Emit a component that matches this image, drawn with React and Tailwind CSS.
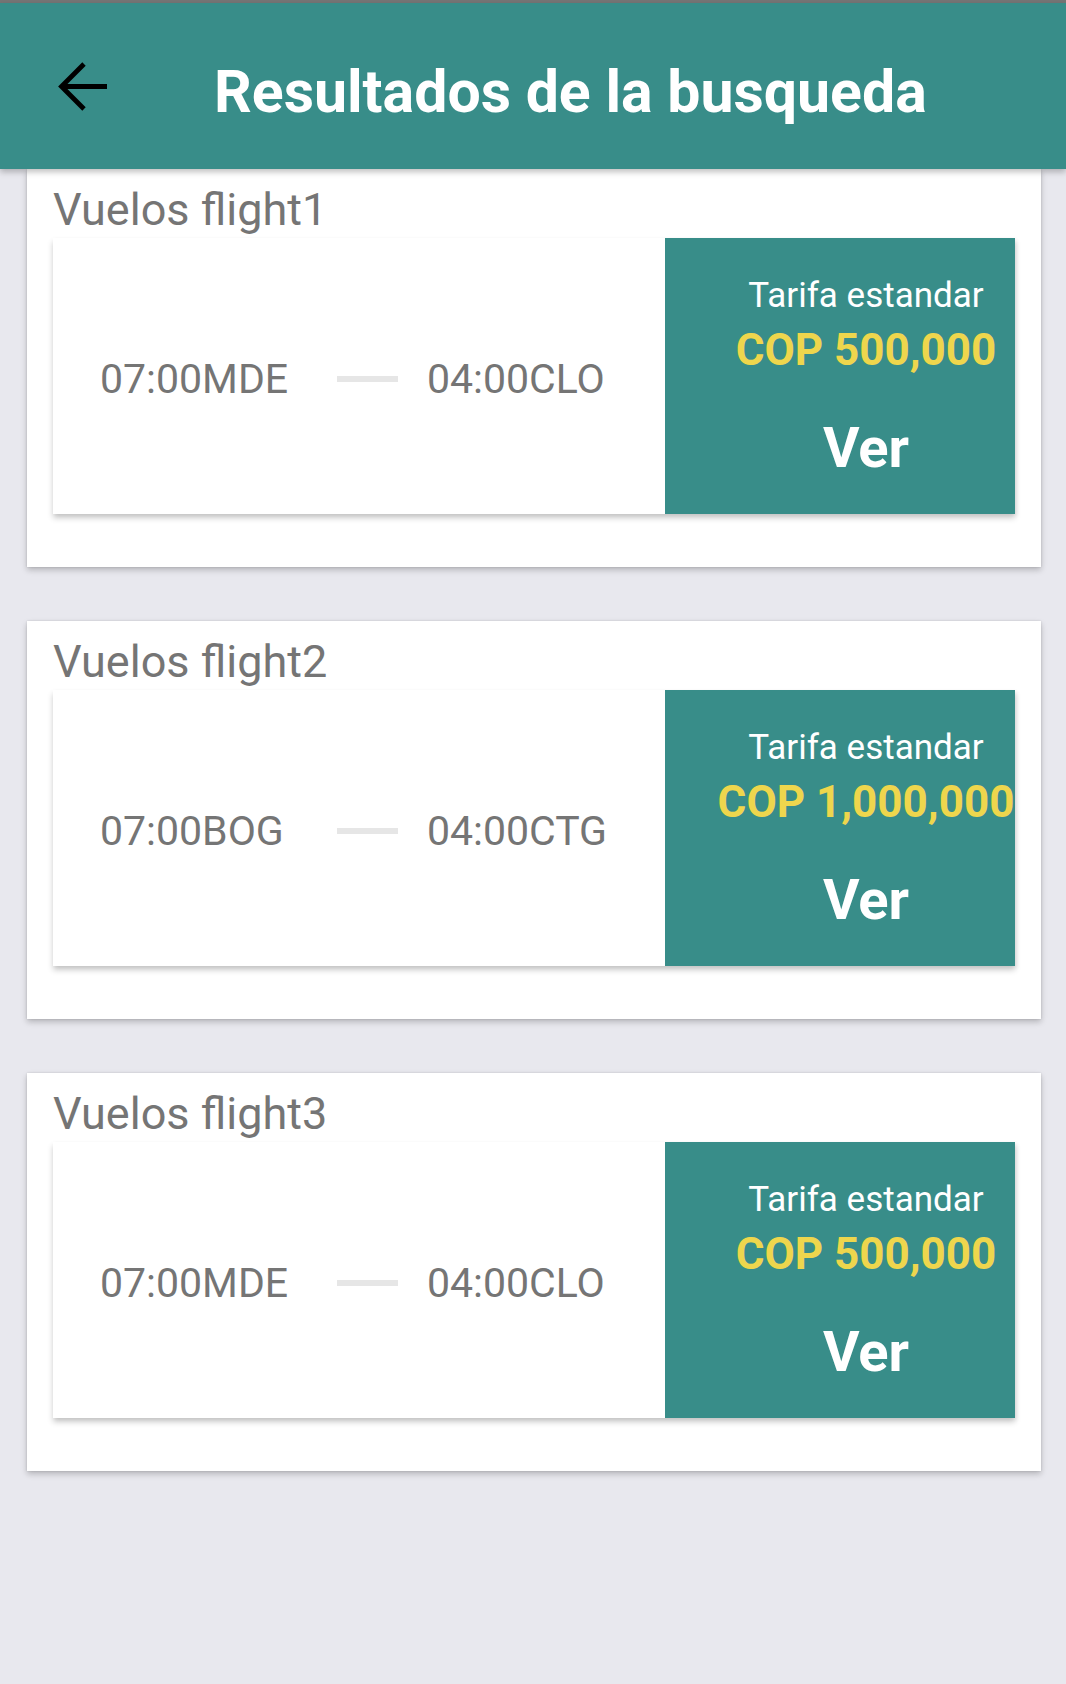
import React from "react";

const flights = [
  { id: "flight1", from: "07:00MDE", to: "04:00CLO", price: "COP 500,000" },
  { id: "flight2", from: "07:00BOG", to: "04:00CTG", price: "COP 1,000,000" },
  { id: "flight3", from: "07:00MDE", to: "04:00CLO", price: "COP 500,000" },
];

function FlightCard({ f }) {
  return (
    <div className="h-[398px] bg-white shadow-[0_3px_6px_rgba(0,0,0,0.22),0_0_2px_rgba(0,0,0,0.12)]">
      <div className="h-[69px] pt-[18px] pl-[26px] text-[45px] leading-[45px] text-[#757575]">
        Vuelos {f.id}
      </div>
      <div className="mx-[26px] flex h-[276px] bg-white shadow-[0_4px_6px_rgba(0,0,0,0.2),2px_2px_4px_rgba(0,0,0,0.06)]">
        <div className="flex flex-1 items-center pl-[47px] pt-[6px] text-[41px] leading-[41px] text-[#757575]">
          <span className="w-[237px]">{f.from}</span>
          <span className="h-[6px] w-[61px] bg-[#e6e6e6]"></span>
          <span className="ml-[29px]">{f.to}</span>
        </div>
        <div className="w-[350px] overflow-hidden whitespace-nowrap bg-[#388d89] pl-[52px] text-center">
          <div className="mt-[40px] text-[35px] leading-[35px] text-white">Tarifa estandar</div>
          <div className="mt-[15px] text-[44px] font-bold leading-[44px] text-[#eed64d]">{f.price}</div>
          <div className="mt-[48px] text-[56px] font-bold leading-[56px] text-white">Ver</div>
        </div>
      </div>
    </div>
  );
}

export default function App() {
  return (
    <div className="h-[1684px] w-full overflow-hidden bg-[#e8e8ee] font-['Roboto',sans-serif]">
      <div className="h-[3px] bg-[#757575]"></div>
      <div className="relative z-10 flex h-[166px] items-center bg-[#388d89] shadow-[0_3px_6px_rgba(0,0,0,0.25)]">
        <svg className="ml-[57px] h-[50px] w-[50px]" viewBox="0 0 50 50" fill="none" stroke="#000" strokeWidth="4.8">
          <path d="M50 25.5 H5" strokeLinecap="butt" />
          <path d="M27 3 L4.5 25.5 L27 48" strokeLinecap="butt" strokeLinejoin="miter" />
        </svg>
        <h1 className="ml-[107px] pt-[10px] text-[59px] font-bold leading-[59px] text-white">Resultados de la busqueda</h1>
      </div>
      <div className="flex flex-col gap-[54px] pl-[27px] pr-[25px]">
        {flights.map((f) => (
          <FlightCard key={f.id} f={f} />
        ))}
      </div>
    </div>
  );
}
